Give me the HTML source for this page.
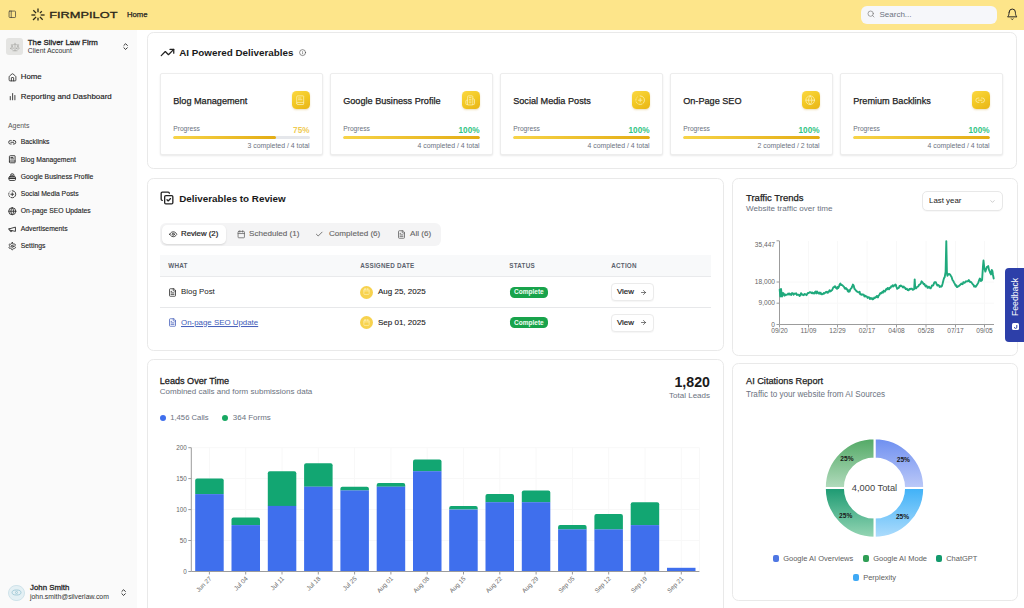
<!DOCTYPE html><html><head><meta charset="utf-8"><title>FirmPilot</title><style>
*{box-sizing:border-box;margin:0;padding:0}
html,body{width:1024px;height:608px;overflow:hidden;background:#fff}
body{font-family:"Liberation Sans",sans-serif;position:relative;color:#222}
.abs,.t,.ic,.card,.sub{position:absolute}
.t{white-space:nowrap;line-height:1}
.ic{display:block;overflow:visible}
.card{background:#fff;border:1px solid #e9e9e9;border-radius:6.5px}
.sub{background:#fff;border:1px solid #ededed;border-radius:2px;box-shadow:0 1px 2px rgba(0,0,0,.09)}
.tile{position:absolute;width:17.6px;height:18px;border-radius:4.5px;background:linear-gradient(150deg,#fbd842 0%,#f2c824 50%,#e8b416 100%);box-shadow:0 1px 2px rgba(190,140,0,.28)}
.pbar{position:absolute;height:3px;border-radius:2px;background:#e5e7eb;overflow:hidden}
.pbar i{display:block;height:100%;border-radius:2px;background:linear-gradient(90deg,#f7d448 0%,#e3ac14 100%)}
</style></head><body>
<div class="abs" style="left:0;top:0;width:1024px;height:30px;background:#fde58a"></div>
<svg class="ic" style="left:7.6px;top:10px;width:8.6px;height:8.6px" viewBox="0 0 24 24" fill="none" stroke="#333" stroke-width="1.9" stroke-linecap="round" stroke-linejoin="round" ><rect width="18" height="18" x="3" y="3" rx="2"/><path d="M9 3v18"/></svg>
<svg class="ic" style="left:28.3px;top:4.5px;width:20px;height:20px" viewBox="0 0 20 20" stroke="#2a2618" stroke-width="1.3" stroke-linecap="butt"><line x1="10.00" y1="7.30" x2="10.00" y2="3.40"/><line x1="11.91" y1="8.09" x2="13.82" y2="6.18"/><line x1="12.70" y1="10.00" x2="16.60" y2="10.00"/><line x1="11.91" y1="11.91" x2="14.67" y2="14.67"/><line x1="10.00" y1="12.70" x2="10.00" y2="15.40"/><line x1="8.09" y1="11.91" x2="5.05" y2="14.95"/><line x1="7.30" y1="10.00" x2="3.40" y2="10.00"/><line x1="8.09" y1="8.09" x2="5.33" y2="5.33"/></svg>
<svg class="ic" style="left:49px;top:6px;width:72px;height:16px" viewBox="0 0 72 16"><text x="0.2" y="12.1" font-family="Liberation Sans, sans-serif" font-size="9.9" font-weight="400" fill="#2a2618" stroke="#2a2618" stroke-width=".32" textLength="68.3" lengthAdjust="spacingAndGlyphs">FIRMPILOT</text></svg>
<div class="t" style="top:14.7px;font-size:7.7px;color:#222;font-weight:400;left:127px;transform:translateY(-50%);-webkit-text-stroke:.25px #222;">Home</div>
<div class="abs" style="left:860.5px;top:5.5px;width:136px;height:18px;border-radius:6px;background:#f6f7fa"></div>
<svg class="ic" style="left:866.5px;top:10.2px;width:8px;height:8px" viewBox="0 0 24 24" fill="none" stroke="#777" stroke-width="2" stroke-linecap="round" stroke-linejoin="round" ><circle cx="11" cy="11" r="8"/><path d="m21 21-4.3-4.3"/></svg>
<div class="t" style="top:14.5px;font-size:8px;color:#6b7280;font-weight:400;left:879.5px;transform:translateY(-50%);">Search...</div>
<svg class="ic" style="left:1005.5px;top:7.8px;width:12.5px;height:12.5px" viewBox="0 0 24 24" fill="none" stroke="#222" stroke-width="1.9" stroke-linecap="round" stroke-linejoin="round" ><path d="M6 8a6 6 0 0 1 12 0c0 7 3 9 3 9H3s3-2 3-9"/><path d="M10.3 21a1.94 1.94 0 0 0 3.4 0"/></svg>
<div class="abs" style="left:0;top:30px;width:137px;height:578px;background:#fafafa"></div>
<div class="abs" style="left:6.3px;top:38.3px;width:16.4px;height:16.7px;border-radius:3px;background:#e4e4e2"></div>
<svg class="ic" style="left:9.5px;top:41.5px;width:10px;height:10px" viewBox="0 0 24 24" fill="none" stroke="#a3a3a0" stroke-width="1.6" stroke-linecap="round" stroke-linejoin="round" ><path d="m16 16 3-8 3 8c-.87.65-1.92 1-3 1s-2.13-.35-3-1Z"/><path d="m2 16 3-8 3 8c-.87.65-1.92 1-3 1s-2.13-.35-3-1Z"/><path d="M7 21h10"/><path d="M12 3v18"/><path d="M3 7h2c2 0 5-1 7-2 2 1 5 2 7 2h2"/></svg>
<div class="t" style="top:42.5px;font-size:7.88px;color:#222;font-weight:400;left:27.8px;transform:translateY(-50%);-webkit-text-stroke:.28px #222;">The Silver Law Firm</div>
<div class="t" style="top:50.8px;font-size:6.9px;color:#333;font-weight:400;left:27.8px;transform:translateY(-50%);">Client Account</div>
<svg class="ic" style="left:121.2px;top:42.3px;width:9.2px;height:9.2px" viewBox="0 0 24 24" fill="none" stroke="#2a2a2a" stroke-width="2.5" stroke-linecap="round" stroke-linejoin="round" ><path d="M7.5 15 12 19.5 16.5 15"/><path d="M7.5 9 12 4.5 16.5 9"/></svg>
<svg class="ic" style="left:7.5px;top:72.8px;width:9px;height:9px" viewBox="0 0 24 24" fill="none" stroke="#333" stroke-width="2.3" stroke-linecap="round" stroke-linejoin="round" ><path d="M15 21v-8a1 1 0 0 0-1-1h-4a1 1 0 0 0-1 1v8"/><path d="M3 10a2 2 0 0 1 .709-1.528l7-5.999a2 2 0 0 1 2.582 0l7 5.999A2 2 0 0 1 21 10v9a2 2 0 0 1-2 2H5a2 2 0 0 1-2-2z"/></svg>
<div class="t" style="top:77.1px;font-size:7.85px;color:#222;font-weight:400;left:20.8px;transform:translateY(-50%);-webkit-text-stroke:.15px #222;">Home</div>
<svg class="ic" style="left:7.6px;top:91.6px;width:9.2px;height:9.2px" viewBox="0 0 24 24" fill="none" stroke="#4a4a4a" stroke-width="2.7" stroke-linecap="round" stroke-linejoin="round" ><path d="M18 20V9"/><path d="M12 20V4"/><path d="M6 20v-8"/></svg>
<div class="t" style="top:96.5px;font-size:7.95px;color:#222;font-weight:400;left:20.8px;transform:translateY(-50%);-webkit-text-stroke:.15px #222;">Reporting and Dashboard</div>
<div class="t" style="top:126.4px;font-size:6.9px;color:#555;font-weight:400;left:8px;transform:translateY(-50%);">Agents</div>
<svg class="ic" style="left:7.8px;top:137.8px;width:8.5px;height:8.5px" viewBox="0 0 24 24" fill="none" stroke="#333" stroke-width="2.6" stroke-linecap="round" stroke-linejoin="round" ><path d="M9 17H7A5 5 0 0 1 7 7h2"/><path d="M15 7h2a5 5 0 1 1 0 10h-2"/><line x1="8" x2="16" y1="12" y2="12"/></svg>
<div class="t" style="top:142.0px;font-size:6.8px;color:#222;font-weight:400;left:20.8px;transform:translateY(-50%);-webkit-text-stroke:.12px #222;">Backlinks</div>
<svg class="ic" style="left:7.8px;top:155.4px;width:8.5px;height:8.5px" viewBox="0 0 24 24" fill="none" stroke="#333" stroke-width="2.6" stroke-linecap="round" stroke-linejoin="round" ><path d="M4 19.5v-15A2.5 2.5 0 0 1 6.5 2H19a1 1 0 0 1 1 1v18a1 1 0 0 1-1 1H6.5a1 1 0 0 1 0-5H20"/><path d="M8 11h8"/><path d="M8 7h6"/></svg>
<div class="t" style="top:159.6px;font-size:6.8px;color:#222;font-weight:400;left:20.8px;transform:translateY(-50%);-webkit-text-stroke:.12px #222;">Blog Management</div>
<svg class="ic" style="left:7.8px;top:173.20000000000002px;width:8.5px;height:8.5px" viewBox="0 0 24 24" fill="none" stroke="#333" stroke-width="2.6" stroke-linecap="round" stroke-linejoin="round" ><path d="M7 10V7a5 5 0 0 1 10 0v3"/><rect x="3" y="10" width="18" height="11" rx="2.5"/><path d="M3 15h18" stroke-width="4"/><path d="M10 6.5h4"/></svg>
<div class="t" style="top:177.4px;font-size:6.8px;color:#222;font-weight:400;left:20.8px;transform:translateY(-50%);-webkit-text-stroke:.12px #222;">Google Business Profile</div>
<svg class="ic" style="left:7.8px;top:189.8px;width:8.5px;height:8.5px" viewBox="0 0 24 24" fill="none" stroke="#333" stroke-width="2.6" stroke-linecap="round" stroke-linejoin="round" ><path d="M12 2a10 10 0 0 1 7.38 16.75"/><path d="M12 8v8"/><path d="M16 12H8"/><path d="M2.5 8.875a10 10 0 0 0-.5 3"/><path d="M2.83 16a10 10 0 0 0 2.43 3.4"/><path d="M4.636 5.235a10 10 0 0 1 .891-.857"/><path d="M8.644 21.42a10 10 0 0 0 7.631-.38"/></svg>
<div class="t" style="top:194.0px;font-size:6.8px;color:#222;font-weight:400;left:20.8px;transform:translateY(-50%);-webkit-text-stroke:.12px #222;">Social Media Posts</div>
<svg class="ic" style="left:7.8px;top:207.10000000000002px;width:8.5px;height:8.5px" viewBox="0 0 24 24" fill="none" stroke="#333" stroke-width="2.6" stroke-linecap="round" stroke-linejoin="round" ><circle cx="12" cy="12" r="10"/><path d="M12 2a14.5 14.5 0 0 0 0 20 14.5 14.5 0 0 0 0-20"/><path d="M2 12h20"/></svg>
<div class="t" style="top:211.3px;font-size:6.8px;color:#222;font-weight:400;left:20.8px;transform:translateY(-50%);-webkit-text-stroke:.12px #222;">On-page SEO Updates</div>
<svg class="ic" style="left:7.8px;top:224.5px;width:8.5px;height:8.5px" viewBox="0 0 24 24" fill="none" stroke="#333" stroke-width="2.6" stroke-linecap="round" stroke-linejoin="round" ><path d="m3 11 18-5v12L3 14v-3z"/><path d="M11.6 16.8a3 3 0 1 1-5.8-1.6"/></svg>
<div class="t" style="top:228.7px;font-size:6.8px;color:#222;font-weight:400;left:20.8px;transform:translateY(-50%);-webkit-text-stroke:.12px #222;">Advertisements</div>
<svg class="ic" style="left:7.8px;top:241.60000000000002px;width:8.5px;height:8.5px" viewBox="0 0 24 24" fill="none" stroke="#333" stroke-width="2.6" stroke-linecap="round" stroke-linejoin="round" ><path d="M12.22 2h-.44a2 2 0 0 0-2 2v.18a2 2 0 0 1-1 1.73l-.43.25a2 2 0 0 1-2 0l-.15-.08a2 2 0 0 0-2.73.73l-.22.38a2 2 0 0 0 .73 2.73l.15.1a2 2 0 0 1 1 1.72v.51a2 2 0 0 1-1 1.74l-.15.09a2 2 0 0 0-.73 2.73l.22.38a2 2 0 0 0 2.73.73l.15-.08a2 2 0 0 1 2 0l.43.25a2 2 0 0 1 1 1.73V20a2 2 0 0 0 2 2h.44a2 2 0 0 0 2-2v-.18a2 2 0 0 1 1-1.73l.43-.25a2 2 0 0 1 2 0l.15.08a2 2 0 0 0 2.73-.73l.22-.39a2 2 0 0 0-.73-2.73l-.15-.08a2 2 0 0 1-1-1.74v-.5a2 2 0 0 1 1-1.74l.15-.09a2 2 0 0 0 .73-2.73l-.22-.38a2 2 0 0 0-2.73-.73l-.15.08a2 2 0 0 1-2 0l-.43-.25a2 2 0 0 1-1-1.73V4a2 2 0 0 0-2-2z"/><circle cx="12" cy="12" r="3"/></svg>
<div class="t" style="top:245.8px;font-size:6.8px;color:#222;font-weight:400;left:20.8px;transform:translateY(-50%);-webkit-text-stroke:.12px #222;">Settings</div>
<div class="abs" style="left:8.2px;top:584.5px;width:16.6px;height:16.6px;border-radius:50%;background:#e4f0f4;border:1px solid #cfe3ea"></div>
<svg class="ic" style="left:11px;top:589.3px;width:11px;height:7px" viewBox="0 0 22 14" fill="none" stroke="#a3cbd8" stroke-width="2"><ellipse cx="11" cy="7" rx="9" ry="5"/><circle cx="11" cy="7" r="2"/></svg>
<div class="t" style="top:588.4px;font-size:7.85px;color:#222;font-weight:400;left:30px;transform:translateY(-50%);-webkit-text-stroke:.28px #222;">John Smith</div>
<div class="t" style="top:597.4px;font-size:6.85px;color:#333;font-weight:400;left:30px;transform:translateY(-50%);">john.smith@silverlaw.com</div>
<svg class="ic" style="left:119.2px;top:588.3px;width:9.2px;height:9.2px" viewBox="0 0 24 24" fill="none" stroke="#2a2a2a" stroke-width="2.5" stroke-linecap="round" stroke-linejoin="round" ><path d="M7.5 15 12 19.5 16.5 15"/><path d="M7.5 9 12 4.5 16.5 9"/></svg>
<div class="card" style="left:147px;top:32px;width:870px;height:137px"></div>
<svg class="ic" style="left:159.6px;top:45.4px;width:15px;height:15px" viewBox="0 0 24 24" fill="none" stroke="#222" stroke-width="2" stroke-linecap="round" stroke-linejoin="round" ><path d="M16 7h6v6"/><path d="m22 7-8.5 8.5-5-5L2 17"/></svg>
<div class="t" style="top:53.2px;font-size:9.84px;color:#1a1a1a;font-weight:700;left:179.2px;transform:translateY(-50%);">AI Powered Deliverables</div>
<svg class="ic" style="left:298.6px;top:49.1px;width:7.2px;height:7.2px" viewBox="0 0 24 24" fill="none" stroke="#444" stroke-width="2" stroke-linecap="round" stroke-linejoin="round" ><circle cx="12" cy="12" r="10"/><path d="M12 16v-4"/><path d="M12 8h.01"/></svg>
<div class="sub" style="left:160px;top:73px;width:163px;height:82px"></div>
<div class="t" style="top:102.0px;font-size:9.15px;color:#222;font-weight:400;left:173.2px;transform:translateY(-50%);-webkit-text-stroke:.25px #222;">Blog Management</div>
<div class="tile" style="left:292.2px;top:90.8px"></div>
<svg class="ic" style="left:295.4px;top:94.6px;width:10.4px;height:10.4px" viewBox="0 0 24 24" fill="none" stroke="#fdf0b0" stroke-width="1.8" stroke-linecap="round" stroke-linejoin="round" ><path d="M4 19.5v-15A2.5 2.5 0 0 1 6.5 2H19a1 1 0 0 1 1 1v18a1 1 0 0 1-1 1H6.5a1 1 0 0 1 0-5H20"/><path d="M8 11h8"/><path d="M8 7h6"/></svg>
<div class="t" style="top:128.9px;font-size:6.7px;color:#6b7280;font-weight:400;left:173.2px;transform:translateY(-50%);">Progress</div>
<div class="t" style="top:130.8px;font-size:8.2px;color:#efcb55;font-weight:700;right:714.5px;transform:translateY(-50%);">75%</div>
<div class="pbar" style="left:173px;top:136.3px;width:137px"><i style="width:75%"></i></div>
<div class="t" style="top:146px;font-size:6.9px;color:#6b7280;font-weight:400;right:714.5px;transform:translateY(-50%);">3 completed / 4 total</div>
<div class="sub" style="left:330px;top:73px;width:163px;height:82px"></div>
<div class="t" style="top:102.0px;font-size:9.15px;color:#222;font-weight:400;left:343.2px;transform:translateY(-50%);-webkit-text-stroke:.25px #222;">Google Business Profile</div>
<div class="tile" style="left:462.2px;top:90.8px"></div>
<svg class="ic" style="left:465.4px;top:94.6px;width:10.4px;height:10.4px" viewBox="0 0 24 24" fill="none" stroke="#fdf0b0" stroke-width="1.8" stroke-linecap="round" stroke-linejoin="round" ><path d="M6 22V4a2 2 0 0 1 2-2h8a2 2 0 0 1 2 2v18Z"/><path d="M6 12H4a2 2 0 0 0-2 2v6a2 2 0 0 0 2 2h2"/><path d="M18 9h2a2 2 0 0 1 2 2v9a2 2 0 0 1-2 2h-2"/><path d="M10 6h4"/><path d="M10 10h4"/><path d="M10 14h4"/><path d="M10 18h4"/></svg>
<div class="t" style="top:128.9px;font-size:6.7px;color:#6b7280;font-weight:400;left:343.2px;transform:translateY(-50%);">Progress</div>
<div class="t" style="top:130.8px;font-size:8.2px;color:#33c485;font-weight:700;right:544.5px;transform:translateY(-50%);">100%</div>
<div class="pbar" style="left:343px;top:136.3px;width:137px"><i style="width:100%"></i></div>
<div class="t" style="top:146px;font-size:6.9px;color:#6b7280;font-weight:400;right:544.5px;transform:translateY(-50%);">4 completed / 4 total</div>
<div class="sub" style="left:500px;top:73px;width:163px;height:82px"></div>
<div class="t" style="top:102.0px;font-size:9.15px;color:#222;font-weight:400;left:513.2px;transform:translateY(-50%);-webkit-text-stroke:.25px #222;">Social Media Posts</div>
<div class="tile" style="left:632.2px;top:90.8px"></div>
<svg class="ic" style="left:635.4px;top:94.6px;width:10.4px;height:10.4px" viewBox="0 0 24 24" fill="none" stroke="#fdf0b0" stroke-width="1.8" stroke-linecap="round" stroke-linejoin="round" ><path d="M12 2a10 10 0 0 1 7.38 16.75"/><path d="M12 8v8"/><path d="M16 12H8"/><path d="M2.5 8.875a10 10 0 0 0-.5 3"/><path d="M2.83 16a10 10 0 0 0 2.43 3.4"/><path d="M4.636 5.235a10 10 0 0 1 .891-.857"/><path d="M8.644 21.42a10 10 0 0 0 7.631-.38"/></svg>
<div class="t" style="top:128.9px;font-size:6.7px;color:#6b7280;font-weight:400;left:513.2px;transform:translateY(-50%);">Progress</div>
<div class="t" style="top:130.8px;font-size:8.2px;color:#33c485;font-weight:700;right:374.5px;transform:translateY(-50%);">100%</div>
<div class="pbar" style="left:513px;top:136.3px;width:137px"><i style="width:100%"></i></div>
<div class="t" style="top:146px;font-size:6.9px;color:#6b7280;font-weight:400;right:374.5px;transform:translateY(-50%);">4 completed / 4 total</div>
<div class="sub" style="left:670px;top:73px;width:163px;height:82px"></div>
<div class="t" style="top:102.0px;font-size:9.15px;color:#222;font-weight:400;left:683.2px;transform:translateY(-50%);-webkit-text-stroke:.25px #222;">On-Page SEO</div>
<div class="tile" style="left:802.2px;top:90.8px"></div>
<svg class="ic" style="left:805.4px;top:94.6px;width:10.4px;height:10.4px" viewBox="0 0 24 24" fill="none" stroke="#fdf0b0" stroke-width="1.8" stroke-linecap="round" stroke-linejoin="round" ><circle cx="12" cy="12" r="10"/><path d="M12 2a14.5 14.5 0 0 0 0 20 14.5 14.5 0 0 0 0-20"/><path d="M2 12h20"/></svg>
<div class="t" style="top:128.9px;font-size:6.7px;color:#6b7280;font-weight:400;left:683.2px;transform:translateY(-50%);">Progress</div>
<div class="t" style="top:130.8px;font-size:8.2px;color:#33c485;font-weight:700;right:204.5px;transform:translateY(-50%);">100%</div>
<div class="pbar" style="left:683px;top:136.3px;width:137px"><i style="width:100%"></i></div>
<div class="t" style="top:146px;font-size:6.9px;color:#6b7280;font-weight:400;right:204.5px;transform:translateY(-50%);">2 completed / 2 total</div>
<div class="sub" style="left:840px;top:73px;width:163px;height:82px"></div>
<div class="t" style="top:102.0px;font-size:9.15px;color:#222;font-weight:400;left:853.2px;transform:translateY(-50%);-webkit-text-stroke:.25px #222;">Premium Backlinks</div>
<div class="tile" style="left:972.2px;top:90.8px"></div>
<svg class="ic" style="left:975.4px;top:94.6px;width:10.4px;height:10.4px" viewBox="0 0 24 24" fill="none" stroke="#fdf0b0" stroke-width="1.8" stroke-linecap="round" stroke-linejoin="round" ><path d="M9 17H7A5 5 0 0 1 7 7h2"/><path d="M15 7h2a5 5 0 1 1 0 10h-2"/><line x1="8" x2="16" y1="12" y2="12"/></svg>
<div class="t" style="top:128.9px;font-size:6.7px;color:#6b7280;font-weight:400;left:853.2px;transform:translateY(-50%);">Progress</div>
<div class="t" style="top:130.8px;font-size:8.2px;color:#33c485;font-weight:700;right:34.5px;transform:translateY(-50%);">100%</div>
<div class="pbar" style="left:853px;top:136.3px;width:137px"><i style="width:100%"></i></div>
<div class="t" style="top:146px;font-size:6.9px;color:#6b7280;font-weight:400;right:34.5px;transform:translateY(-50%);">4 completed / 4 total</div>
<div class="card" style="left:147px;top:178px;width:577px;height:173px"></div>
<svg class="ic" style="left:160px;top:191.3px;width:14px;height:14px" viewBox="0 0 24 24" fill="none" stroke="#222" stroke-width="2.25" stroke-linecap="round" stroke-linejoin="round" ><path d="m12 15 2 2 4-4"/><rect width="14" height="14" x="8" y="8" rx="2"/><path d="M4 16c-1.1 0-2-.9-2-2V4c0-1.1.9-2 2-2h10c1.1 0 2 .9 2 2"/></svg>
<div class="t" style="top:198.8px;font-size:9.84px;color:#1a1a1a;font-weight:700;left:179.2px;transform:translateY(-50%);">Deliverables to Review</div>
<div class="abs" style="left:160px;top:223px;width:281px;height:23px;border-radius:6px;background:#f4f4f5"></div>
<div class="abs" style="left:161.5px;top:225px;width:64.3px;height:18.5px;border-radius:5px;background:#fff;box-shadow:0 1px 2px rgba(0,0,0,.12)"></div>
<svg class="ic" style="left:168.5px;top:230.2px;width:8.5px;height:8.5px" viewBox="0 0 24 24" fill="none" stroke="#2a2a2a" stroke-width="2.3" stroke-linecap="round" stroke-linejoin="round" ><path d="M2 12s3-7 10-7 10 7 10 7-3 7-10 7-10-7-10-7Z"/><circle cx="12" cy="12" r="3"/></svg>
<div class="t" style="top:234px;font-size:7.8px;color:#222;font-weight:400;left:181px;transform:translateY(-50%);-webkit-text-stroke:.2px #222;">Review (2)</div>
<svg class="ic" style="left:237px;top:230px;width:8.5px;height:8.5px" viewBox="0 0 24 24" fill="none" stroke="#666" stroke-width="2.2" stroke-linecap="round" stroke-linejoin="round" ><rect width="18" height="18" x="3" y="4" rx="2"/><path d="M16 2v4"/><path d="M8 2v4"/><path d="M3 10h18"/></svg>
<div class="t" style="top:234px;font-size:8.1px;color:#666;font-weight:400;left:249px;transform:translateY(-50%);-webkit-text-stroke:.12px #666;">Scheduled (1)</div>
<svg class="ic" style="left:315.3px;top:230px;width:8.5px;height:8.5px" viewBox="0 0 24 24" fill="none" stroke="#5c5c5c" stroke-width="2.3" stroke-linecap="round" stroke-linejoin="round" ><path d="M20 6 9 17l-5-5"/></svg>
<div class="t" style="top:234px;font-size:8.1px;color:#666;font-weight:400;left:329px;transform:translateY(-50%);-webkit-text-stroke:.12px #666;">Completed (6)</div>
<svg class="ic" style="left:397.3px;top:229.8px;width:9px;height:9px" viewBox="0 0 24 24" fill="none" stroke="#666" stroke-width="2.2" stroke-linecap="round" stroke-linejoin="round" ><path d="M15 2H6a2 2 0 0 0-2 2v16a2 2 0 0 0 2 2h12a2 2 0 0 0 2-2V7Z"/><path d="M14 2v4a2 2 0 0 0 2 2h4"/><path d="M10 9H8"/><path d="M16 13H8"/><path d="M16 17H8"/></svg>
<div class="t" style="top:234px;font-size:8.1px;color:#666;font-weight:400;left:410px;transform:translateY(-50%);-webkit-text-stroke:.12px #666;">All (6)</div>
<div class="abs" style="left:160px;top:255px;width:551px;height:22px;background:#f8f9fa;border-bottom:1px solid #e9eaec"></div>
<div class="t" style="top:266px;font-size:6.3px;color:#5b626d;font-weight:700;letter-spacing:0.22px;left:168.3px;transform:translateY(-50%);">WHAT</div>
<div class="t" style="top:266px;font-size:6.3px;color:#5b626d;font-weight:700;letter-spacing:0.22px;left:360.3px;transform:translateY(-50%);">ASSIGNED DATE</div>
<div class="t" style="top:266px;font-size:6.3px;color:#5b626d;font-weight:700;letter-spacing:0.22px;left:509.3px;transform:translateY(-50%);">STATUS</div>
<div class="t" style="top:266px;font-size:6.3px;color:#5b626d;font-weight:700;letter-spacing:0.22px;left:611.3px;transform:translateY(-50%);">ACTION</div>
<div class="abs" style="left:160px;top:307px;width:551px;height:1px;background:#e7e8ea"></div>
<svg class="ic" style="left:167.5px;top:287.5px;width:9px;height:9px" viewBox="0 0 24 24" fill="none" stroke="#222" stroke-width="2" stroke-linecap="round" stroke-linejoin="round" ><path d="M15 2H6a2 2 0 0 0-2 2v16a2 2 0 0 0 2 2h12a2 2 0 0 0 2-2V7Z"/><path d="M14 2v4a2 2 0 0 0 2 2h4"/><path d="M10 9H8"/><path d="M16 13H8"/><path d="M16 17H8"/></svg>
<div class="t" style="top:292px;font-size:7.9px;color:#222;font-weight:400;left:181px;transform:translateY(-50%);">Blog Post</div>
<div class="abs" style="left:360px;top:285.5px;width:13px;height:13px;border-radius:50%;background:#f7d24e"></div>
<svg class="ic" style="left:363px;top:288.2px;width:7px;height:7px" viewBox="0 0 24 24" fill="none" stroke="#fff2b8" stroke-width="2.3" stroke-linecap="round" stroke-linejoin="round" ><rect width="18" height="18" x="3" y="4" rx="2"/><path d="M16 2v4"/><path d="M8 2v4"/><path d="M3 10h18"/></svg>
<div class="t" style="top:292.2px;font-size:8.0px;color:#222;font-weight:400;left:378px;transform:translateY(-50%);-webkit-text-stroke:.12px #222;">Aug 25, 2025</div>
<div class="abs" style="left:509.6px;top:286.5px;width:38.6px;height:11.2px;border-radius:4.5px;background:#18a34b"></div>
<div class="t" style="top:292.1px;font-size:6.5px;color:#f3fff6;font-weight:700;left:528.9px;transform:translate(-50%,-50%);">Complete</div>
<div class="abs" style="left:611px;top:283px;width:43px;height:18px;border-radius:4px;background:#fff;border:1px solid #ebebeb;box-shadow:0 1px 1px rgba(0,0,0,.04)"></div>
<div class="t" style="top:292px;font-size:7.9px;color:#222;font-weight:400;left:617px;transform:translateY(-50%);-webkit-text-stroke:.2px #222;">View</div>
<svg class="ic" style="left:640px;top:288.5px;width:7px;height:7px" viewBox="0 0 24 24" fill="none" stroke="#333" stroke-width="2.2" stroke-linecap="round" stroke-linejoin="round" ><path d="M5 12h14"/><path d="m12 5 7 7-7 7"/></svg>
<svg class="ic" style="left:167.5px;top:318.0px;width:9px;height:9px" viewBox="0 0 24 24" fill="none" stroke="#405bb8" stroke-width="2" stroke-linecap="round" stroke-linejoin="round" ><path d="M15 2H6a2 2 0 0 0-2 2v16a2 2 0 0 0 2 2h12a2 2 0 0 0 2-2V7Z"/><path d="M14 2v4a2 2 0 0 0 2 2h4"/><path d="M10 9H8"/><path d="M16 13H8"/><path d="M16 17H8"/></svg>
<div class="t" style="top:322.5px;font-size:7.9px;color:#405bb8;font-weight:400;left:181px;transform:translateY(-50%);text-decoration:underline;">On-page SEO Update</div>
<div class="abs" style="left:360px;top:316.0px;width:13px;height:13px;border-radius:50%;background:#f7d24e"></div>
<svg class="ic" style="left:363px;top:318.7px;width:7px;height:7px" viewBox="0 0 24 24" fill="none" stroke="#fff2b8" stroke-width="2.3" stroke-linecap="round" stroke-linejoin="round" ><rect width="18" height="18" x="3" y="4" rx="2"/><path d="M16 2v4"/><path d="M8 2v4"/><path d="M3 10h18"/></svg>
<div class="t" style="top:322.7px;font-size:8.0px;color:#222;font-weight:400;left:378px;transform:translateY(-50%);-webkit-text-stroke:.12px #222;">Sep 01, 2025</div>
<div class="abs" style="left:509.6px;top:317.0px;width:38.6px;height:11.2px;border-radius:4.5px;background:#18a34b"></div>
<div class="t" style="top:322.6px;font-size:6.5px;color:#f3fff6;font-weight:700;left:528.9px;transform:translate(-50%,-50%);">Complete</div>
<div class="abs" style="left:611px;top:313.5px;width:43px;height:18px;border-radius:4px;background:#fff;border:1px solid #ebebeb;box-shadow:0 1px 1px rgba(0,0,0,.04)"></div>
<div class="t" style="top:322.5px;font-size:7.9px;color:#222;font-weight:400;left:617px;transform:translateY(-50%);-webkit-text-stroke:.2px #222;">View</div>
<svg class="ic" style="left:640px;top:319.0px;width:7px;height:7px" viewBox="0 0 24 24" fill="none" stroke="#333" stroke-width="2.2" stroke-linecap="round" stroke-linejoin="round" ><path d="M5 12h14"/><path d="m12 5 7 7-7 7"/></svg>
<div class="card" style="left:732px;top:178px;width:286px;height:178px"></div>
<div class="t" style="top:197.6px;font-size:9.5px;color:#222;font-weight:400;left:746px;transform:translateY(-50%);-webkit-text-stroke:.25px #222;">Traffic Trends</div>
<div class="t" style="top:209.4px;font-size:8.1px;color:#6b7280;font-weight:400;left:746px;transform:translateY(-50%);">Website traffic over time</div>
<div class="abs" style="left:922px;top:191px;width:81px;height:20px;border-radius:5px;background:#fff;border:1px solid #e8e8e8;box-shadow:0 1px 1px rgba(0,0,0,.03)"></div>
<div class="t" style="top:201px;font-size:7.9px;color:#222;font-weight:400;left:929px;transform:translateY(-50%);">Last year</div>
<svg class="ic" style="left:989px;top:197.5px;width:7px;height:7px" viewBox="0 0 24 24" fill="none" stroke="#aaa" stroke-width="2" stroke-linecap="round" stroke-linejoin="round" ><path d="m6 9 6 6 6-6"/></svg>
<svg class="ic" style="left:733px;top:178px;width:285px;height:178px" viewBox="733 178 285 178"><line x1="808.5" y1="241" x2="808.5" y2="324.5" stroke="#f8f8f8" stroke-width="1"/><line x1="837.5" y1="241" x2="837.5" y2="324.5" stroke="#f8f8f8" stroke-width="1"/><line x1="867" y1="241" x2="867" y2="324.5" stroke="#f8f8f8" stroke-width="1"/><line x1="896.5" y1="241" x2="896.5" y2="324.5" stroke="#f8f8f8" stroke-width="1"/><line x1="926" y1="241" x2="926" y2="324.5" stroke="#f8f8f8" stroke-width="1"/><line x1="955.5" y1="241" x2="955.5" y2="324.5" stroke="#f8f8f8" stroke-width="1"/><line x1="984.5" y1="241" x2="984.5" y2="324.5" stroke="#f8f8f8" stroke-width="1"/><line x1="779.5" y1="303.2" x2="994" y2="303.2" stroke="#f8f8f8" stroke-width="1"/><line x1="779.5" y1="282.0" x2="994" y2="282.0" stroke="#f8f8f8" stroke-width="1"/><line x1="779.5" y1="241" x2="779.5" y2="324.5" stroke="#9c9c9c" stroke-width="1"/><line x1="779.5" y1="324.5" x2="994" y2="324.5" stroke="#9c9c9c" stroke-width="1"/><line x1="776.5" y1="324.5" x2="779.5" y2="324.5" stroke="#9c9c9c" stroke-width="1"/><line x1="776.5" y1="303.2" x2="779.5" y2="303.2" stroke="#9c9c9c" stroke-width="1"/><line x1="776.5" y1="282.0" x2="779.5" y2="282.0" stroke="#9c9c9c" stroke-width="1"/><line x1="776.5" y1="240.8" x2="779.5" y2="240.8" stroke="#9c9c9c" stroke-width="1"/><line x1="779.5" y1="324.5" x2="779.5" y2="327.5" stroke="#9c9c9c" stroke-width="1"/><line x1="808.5" y1="324.5" x2="808.5" y2="327.5" stroke="#9c9c9c" stroke-width="1"/><line x1="837.5" y1="324.5" x2="837.5" y2="327.5" stroke="#9c9c9c" stroke-width="1"/><line x1="867" y1="324.5" x2="867" y2="327.5" stroke="#9c9c9c" stroke-width="1"/><line x1="896.5" y1="324.5" x2="896.5" y2="327.5" stroke="#9c9c9c" stroke-width="1"/><line x1="926" y1="324.5" x2="926" y2="327.5" stroke="#9c9c9c" stroke-width="1"/><line x1="955.5" y1="324.5" x2="955.5" y2="327.5" stroke="#9c9c9c" stroke-width="1"/><line x1="984.5" y1="324.5" x2="984.5" y2="327.5" stroke="#9c9c9c" stroke-width="1"/><path d="M779.7 289.6 L780.3 296.5 L781.0 289.0 L782.0 296.5 L783.0 293.0 L783.7 293.5 L784.4 295.7 L785.0 294.4 L785.7 295.2 L786.4 294.6 L787.0 294.6 L787.6 294.6 L788.2 293.5 L788.8 294.4 L789.4 293.6 L790.0 294.6 L790.6 294.2 L791.2 295.0 L791.8 293.1 L792.4 293.1 L793.0 293.6 L793.6 294.7 L794.2 293.9 L794.9 293.5 L795.5 293.8 L796.2 293.3 L797.0 295.0 L797.6 294.7 L798.3 294.6 L799.0 294.8 L799.6 296.0 L800.3 295.4 L801.0 293.2 L801.7 294.0 L802.3 294.7 L803.0 295.0 L803.7 295.2 L804.4 294.0 L805.1 294.1 L805.8 294.5 L806.5 295.2 L807.2 293.9 L808.0 293.0 L808.7 293.1 L809.4 292.6 L810.0 292.1 L810.7 292.4 L811.5 293.2 L812.2 292.5 L813.0 293.4 L813.7 293.0 L814.3 293.4 L815.0 292.0 L815.6 291.6 L816.3 293.4 L817.0 291.4 L817.6 292.4 L818.4 293.5 L819.2 292.5 L820.0 293.8 L820.6 292.7 L821.3 294.2 L821.9 294.4 L822.6 294.0 L823.2 293.8 L823.9 292.9 L824.6 293.4 L825.3 292.7 L826.0 292.0 L826.6 291.8 L827.2 292.6 L827.8 292.8 L828.4 291.5 L829.0 291.5 L829.6 290.2 L830.2 291.5 L830.9 291.1 L831.5 290.5 L832.2 290.0 L833.0 288.0 L833.6 287.1 L834.3 286.8 L835.0 286.2 L835.6 287.7 L836.3 287.5 L837.0 288.8 L837.7 287.0 L838.3 287.9 L839.0 286.5 L839.7 284.4 L840.4 283.5 L841.2 285.1 L842.0 285.0 L842.7 285.5 L843.3 286.3 L844.0 286.8 L844.6 288.1 L845.2 288.8 L845.9 287.9 L846.5 289.0 L847.1 289.2 L847.7 291.0 L848.3 291.7 L848.9 290.2 L849.5 291.6 L850.2 289.8 L850.8 288.6 L851.5 288.0 L852.2 286.5 L852.9 284.6 L853.7 285.6 L854.5 289.0 L855.2 289.4 L855.8 290.5 L856.5 291.0 L857.1 291.8 L857.8 291.8 L858.4 292.4 L859.0 292.5 L859.6 291.8 L860.2 294.2 L860.8 294.3 L861.4 294.8 L862.0 294.3 L862.6 294.5 L863.2 294.9 L863.8 294.7 L864.4 296.4 L865.0 296.5 L865.6 295.8 L866.3 296.5 L867.0 296.7 L867.6 297.9 L868.4 297.2 L869.2 297.4 L870.0 299.0 L870.6 298.1 L871.3 298.8 L872.0 298.1 L872.6 299.3 L873.4 299.1 L874.2 297.6 L875.0 298.0 L875.6 297.3 L876.2 296.9 L876.8 295.9 L877.4 297.3 L878.0 297.3 L878.6 295.7 L879.4 294.9 L880.2 293.2 L881.0 293.5 L881.6 292.6 L882.3 291.9 L882.9 292.8 L883.6 290.7 L884.2 291.0 L884.9 291.7 L885.6 290.3 L886.3 289.0 L887.0 289.5 L887.7 287.9 L888.4 288.7 L889.0 289.3 L889.7 287.7 L890.5 287.8 L891.2 286.3 L892.0 286.5 L892.7 285.3 L893.3 286.4 L894.0 285.4 L894.6 285.6 L895.3 284.6 L895.9 285.1 L896.5 287.0 L897.2 288.8 L898.0 288.2 L898.8 287.8 L899.5 286.0 L900.1 286.3 L900.8 285.5 L901.5 286.2 L902.3 286.5 L903.0 287.5 L903.7 286.6 L904.4 287.5 L905.0 287.7 L905.7 289.0 L906.4 288.8 L907.0 288.8 L907.6 290.0 L908.2 290.2 L908.8 290.2 L909.4 288.9 L910.0 289.3 L910.7 288.7 L911.3 288.7 L912.0 288.8 L912.6 289.8 L913.3 289.6 L914.2 289.0 L914.7 279.4 L915.2 288.2 L916.1 288.4 L917.0 287.0 L917.7 286.7 L918.3 286.4 L919.0 285.0 L919.6 284.5 L920.3 284.1 L921.0 282.9 L921.6 281.3 L922.3 282.1 L923.0 283.0 L923.7 284.2 L924.4 284.0 L925.0 285.3 L925.7 286.4 L926.4 285.6 L927.0 286.5 L927.6 287.9 L928.2 287.7 L928.8 286.7 L929.4 287.0 L930.0 288.2 L930.7 288.3 L931.3 287.1 L932.0 285.5 L932.6 285.6 L933.2 285.3 L933.8 283.8 L934.4 282.4 L935.0 282.1 L935.8 282.2 L936.5 284.0 L937.4 285.6 L938.3 284.9 L939.0 285.4 L939.6 286.9 L940.3 286.2 L941.0 286.8 L941.8 286.2 L942.5 284.0 L943.5 280.0 L944.1 278.0 L944.7 277.1 L945.6 272.0 L946.3 241.1 L946.9 272.0 L947.4 275.8 L948.2 274.3 L949.0 274.0 L949.9 274.3 L950.8 275.8 L951.6 277.0 L952.5 280.0 L953.3 281.0 L954.1 282.6 L954.9 284.0 L955.6 285.7 L956.3 285.2 L957.0 287.1 L957.7 286.8 L958.5 286.3 L959.2 285.7 L960.0 285.0 L960.6 284.5 L961.3 283.6 L961.9 284.0 L962.6 284.2 L963.3 282.2 L964.0 282.5 L964.6 282.8 L965.2 282.1 L965.9 281.3 L966.5 281.5 L967.3 281.1 L968.0 281.2 L968.8 280.0 L969.4 281.1 L970.0 282.0 L970.8 281.8 L971.6 282.7 L972.2 283.5 L972.9 284.4 L973.5 285.0 L974.2 286.6 L975.0 286.1 L975.7 286.8 L976.6 285.4 L977.5 284.0 L978.3 282.6 L979.1 280.2 L979.9 278.5 L981.0 281.0 L982.1 280.0 L983.0 266.0 L983.5 260.5 L984.3 268.0 L985.4 271.6 L986.1 269.2 L986.8 267.0 L987.5 267.0 L988.2 266.0 L988.9 269.6 L989.5 271.0 L990.2 272.8 L991.0 274.4 L991.8 270.0 L992.4 271.0 L993.0 275.0 L993.7 278.5" fill="none" stroke="#1fa97c" stroke-width="1.9" stroke-linejoin="round" stroke-linecap="round"/></svg>
<div class="t" style="top:324.5px;font-size:6.6px;color:#666;font-weight:400;right:249px;transform:translateY(-50%);">0</div>
<div class="t" style="top:303.25px;font-size:6.6px;color:#666;font-weight:400;right:249px;transform:translateY(-50%);">9,000</div>
<div class="t" style="top:282.0px;font-size:6.6px;color:#666;font-weight:400;right:249px;transform:translateY(-50%);">18,000</div>
<div class="t" style="top:244.60569444444445px;font-size:6.6px;color:#666;font-weight:400;right:249px;transform:translateY(-50%);">35,447</div>
<div class="t" style="top:331.3px;font-size:6.6px;color:#666;font-weight:400;left:779.5px;transform:translate(-50%,-50%);">09/20</div>
<div class="t" style="top:331.3px;font-size:6.6px;color:#666;font-weight:400;left:808.5px;transform:translate(-50%,-50%);">11/09</div>
<div class="t" style="top:331.3px;font-size:6.6px;color:#666;font-weight:400;left:837.5px;transform:translate(-50%,-50%);">12/29</div>
<div class="t" style="top:331.3px;font-size:6.6px;color:#666;font-weight:400;left:867px;transform:translate(-50%,-50%);">02/17</div>
<div class="t" style="top:331.3px;font-size:6.6px;color:#666;font-weight:400;left:896.5px;transform:translate(-50%,-50%);">04/08</div>
<div class="t" style="top:331.3px;font-size:6.6px;color:#666;font-weight:400;left:926px;transform:translate(-50%,-50%);">05/28</div>
<div class="t" style="top:331.3px;font-size:6.6px;color:#666;font-weight:400;left:955.5px;transform:translate(-50%,-50%);">07/17</div>
<div class="t" style="top:331.3px;font-size:6.6px;color:#666;font-weight:400;left:984.5px;transform:translate(-50%,-50%);">09/05</div>
<div class="abs" style="left:1005px;top:268px;width:22px;height:74px;border-radius:4px 0 0 4px;background:#2d3fa9"></div>
<div class="t" style="left:1015px;top:297px;font-size:8.7px;color:#fff;transform:translate(-50%,-50%) rotate(-90deg)">Feedback</div>
<div class="abs" style="left:1011.5px;top:323px;width:7px;height:7px;border-radius:1.5px;background:#fff"></div>
<svg class="ic" style="left:1011.5px;top:323px;width:7px;height:7px" viewBox="0 0 7 7" fill="none" stroke="#2d3fa9" stroke-width="1"><path d="M4.8 2 v2.2 a1.2 1.2 0 0 1 -2.4 0"/></svg>
<div class="card" style="left:147px;top:359px;width:577px;height:260px"></div>
<div class="t" style="top:382.2px;font-size:9.1px;color:#222;font-weight:400;left:159.8px;transform:translateY(-50%);-webkit-text-stroke:.3px #222;">Leads Over Time</div>
<div class="t" style="top:391.5px;font-size:8px;color:#6b7280;font-weight:400;left:159.8px;transform:translateY(-50%);">Combined calls and form submissions data</div>
<div class="t" style="top:382.2px;font-size:14.2px;color:#1a1a1a;font-weight:700;right:314px;transform:translateY(-50%);">1,820</div>
<div class="t" style="top:396.3px;font-size:8px;color:#6b7280;font-weight:400;right:314px;transform:translateY(-50%);">Total Leads</div>
<div class="abs" style="left:160px;top:415px;width:6px;height:6px;border-radius:50%;background:#3f6fed"></div>
<div class="t" style="top:418.3px;font-size:7.7px;color:#6b7280;font-weight:400;left:170.2px;transform:translateY(-50%);">1,456 Calls</div>
<div class="abs" style="left:222px;top:415px;width:6px;height:6px;border-radius:50%;background:#17a862"></div>
<div class="t" style="top:418.3px;font-size:7.95px;color:#6b7280;font-weight:400;left:232.8px;transform:translateY(-50%);">364 Forms</div>
<svg class="ic" style="left:147px;top:360px;width:577px;height:248px" viewBox="147 360 577 248"><line x1="191.3" y1="540.5" x2="699.4" y2="540.5" stroke="#f8f8f8" stroke-width="1"/><line x1="191.3" y1="509.6" x2="699.4" y2="509.6" stroke="#f8f8f8" stroke-width="1"/><line x1="191.3" y1="478.6" x2="699.4" y2="478.6" stroke="#f8f8f8" stroke-width="1"/><line x1="191.3" y1="447.7" x2="699.4" y2="447.7" stroke="#f8f8f8" stroke-width="1"/><line x1="209.4" y1="447.7" x2="209.4" y2="571.5" stroke="#f8f8f8" stroke-width="1"/><line x1="245.7" y1="447.7" x2="245.7" y2="571.5" stroke="#f8f8f8" stroke-width="1"/><line x1="282.0" y1="447.7" x2="282.0" y2="571.5" stroke="#f8f8f8" stroke-width="1"/><line x1="318.3" y1="447.7" x2="318.3" y2="571.5" stroke="#f8f8f8" stroke-width="1"/><line x1="354.6" y1="447.7" x2="354.6" y2="571.5" stroke="#f8f8f8" stroke-width="1"/><line x1="390.9" y1="447.7" x2="390.9" y2="571.5" stroke="#f8f8f8" stroke-width="1"/><line x1="427.2" y1="447.7" x2="427.2" y2="571.5" stroke="#f8f8f8" stroke-width="1"/><line x1="463.5" y1="447.7" x2="463.5" y2="571.5" stroke="#f8f8f8" stroke-width="1"/><line x1="499.8" y1="447.7" x2="499.8" y2="571.5" stroke="#f8f8f8" stroke-width="1"/><line x1="536.1" y1="447.7" x2="536.1" y2="571.5" stroke="#f8f8f8" stroke-width="1"/><line x1="572.4" y1="447.7" x2="572.4" y2="571.5" stroke="#f8f8f8" stroke-width="1"/><line x1="608.7" y1="447.7" x2="608.7" y2="571.5" stroke="#f8f8f8" stroke-width="1"/><line x1="645.0" y1="447.7" x2="645.0" y2="571.5" stroke="#f8f8f8" stroke-width="1"/><line x1="681.3" y1="447.7" x2="681.3" y2="571.5" stroke="#f8f8f8" stroke-width="1"/><line x1="699.4" y1="447.7" x2="699.4" y2="571.5" stroke="#f8f8f8" stroke-width="1"/><path d="M195.2 494.1 V480.6 Q195.2 478.6 197.2 478.6 H221.7 Q223.7 478.6 223.7 480.6 V494.1 Z" fill="#12a672"/><rect x="195.2" y="494.1" width="28.5" height="77.4" fill="#3f6fed"/><path d="M231.5 525.1 V519.6 Q231.5 517.6 233.5 517.6 H258.0 Q260.0 517.6 260.0 519.6 V525.1 Z" fill="#12a672"/><rect x="231.5" y="525.1" width="28.5" height="46.4" fill="#3f6fed"/><path d="M267.8 505.9 V473.2 Q267.8 471.2 269.8 471.2 H294.3 Q296.3 471.2 296.3 473.2 V505.9 Z" fill="#12a672"/><rect x="267.8" y="505.9" width="28.5" height="65.6" fill="#3f6fed"/><path d="M304.1 486.7 V465.2 Q304.1 463.2 306.1 463.2 H330.6 Q332.6 463.2 332.6 465.2 V486.7 Z" fill="#12a672"/><rect x="304.1" y="486.7" width="28.5" height="84.8" fill="#3f6fed"/><path d="M340.4 490.4 V488.7 Q340.4 486.7 342.4 486.7 H366.9 Q368.9 486.7 368.9 488.7 V490.4 Z" fill="#12a672"/><rect x="340.4" y="490.4" width="28.5" height="81.1" fill="#3f6fed"/><path d="M376.7 486.7 V485.0 Q376.7 483.0 378.7 483.0 H403.2 Q405.2 483.0 405.2 485.0 V486.7 Z" fill="#12a672"/><rect x="376.7" y="486.7" width="28.5" height="84.8" fill="#3f6fed"/><path d="M413.0 471.2 V461.5 Q413.0 459.5 415.0 459.5 H439.5 Q441.5 459.5 441.5 461.5 V471.2 Z" fill="#12a672"/><rect x="413.0" y="471.2" width="28.5" height="100.3" fill="#3f6fed"/><path d="M449.2 509.6 V507.9 Q449.2 505.9 451.2 505.9 H475.7 Q477.7 505.9 477.7 507.9 V509.6 Z" fill="#12a672"/><rect x="449.2" y="509.6" width="28.5" height="61.9" fill="#3f6fed"/><path d="M485.5 502.2 V496.1 Q485.5 494.1 487.5 494.1 H512.0 Q514.0 494.1 514.0 496.1 V502.2 Z" fill="#12a672"/><rect x="485.5" y="502.2" width="28.5" height="69.3" fill="#3f6fed"/><path d="M521.8 502.2 V492.4 Q521.8 490.4 523.8 490.4 H548.3 Q550.3 490.4 550.3 492.4 V502.2 Z" fill="#12a672"/><rect x="521.8" y="502.2" width="28.5" height="69.3" fill="#3f6fed"/><path d="M558.1 529.4 V527.1 Q558.1 525.1 560.1 525.1 H584.6 Q586.6 525.1 586.6 527.1 V529.4 Z" fill="#12a672"/><rect x="558.1" y="529.4" width="28.5" height="42.1" fill="#3f6fed"/><path d="M594.4 529.4 V515.9 Q594.4 513.9 596.4 513.9 H620.9 Q622.9 513.9 622.9 515.9 V529.4 Z" fill="#12a672"/><rect x="594.4" y="529.4" width="28.5" height="42.1" fill="#3f6fed"/><path d="M630.7 525.1 V504.2 Q630.7 502.2 632.7 502.2 H657.2 Q659.2 502.2 659.2 504.2 V525.1 Z" fill="#12a672"/><rect x="630.7" y="525.1" width="28.5" height="46.4" fill="#3f6fed"/><rect x="667.0" y="567.8" width="28.5" height="3.7" fill="#3f6fed"/><line x1="191.3" y1="447.7" x2="191.3" y2="571.5" stroke="#9c9c9c" stroke-width="1"/><line x1="191.3" y1="571.5" x2="699.4" y2="571.5" stroke="#9c9c9c" stroke-width="1"/><line x1="188.3" y1="571.5" x2="191.3" y2="571.5" stroke="#9c9c9c" stroke-width="1"/><line x1="188.3" y1="540.5" x2="191.3" y2="540.5" stroke="#9c9c9c" stroke-width="1"/><line x1="188.3" y1="509.6" x2="191.3" y2="509.6" stroke="#9c9c9c" stroke-width="1"/><line x1="188.3" y1="478.6" x2="191.3" y2="478.6" stroke="#9c9c9c" stroke-width="1"/><line x1="188.3" y1="447.7" x2="191.3" y2="447.7" stroke="#9c9c9c" stroke-width="1"/><line x1="209.4" y1="571.5" x2="209.4" y2="574.5" stroke="#9c9c9c" stroke-width="1"/><text x="212.0" y="579.1" font-family="Liberation Sans, sans-serif" font-size="6.3" fill="#666" text-anchor="end" transform="rotate(-45 212.0 579.1)">Jun 27</text><line x1="245.7" y1="571.5" x2="245.7" y2="574.5" stroke="#9c9c9c" stroke-width="1"/><text x="248.3" y="579.1" font-family="Liberation Sans, sans-serif" font-size="6.3" fill="#666" text-anchor="end" transform="rotate(-45 248.3 579.1)">Jul 04</text><line x1="282.0" y1="571.5" x2="282.0" y2="574.5" stroke="#9c9c9c" stroke-width="1"/><text x="284.6" y="579.1" font-family="Liberation Sans, sans-serif" font-size="6.3" fill="#666" text-anchor="end" transform="rotate(-45 284.6 579.1)">Jul 11</text><line x1="318.3" y1="571.5" x2="318.3" y2="574.5" stroke="#9c9c9c" stroke-width="1"/><text x="320.9" y="579.1" font-family="Liberation Sans, sans-serif" font-size="6.3" fill="#666" text-anchor="end" transform="rotate(-45 320.9 579.1)">Jul 18</text><line x1="354.6" y1="571.5" x2="354.6" y2="574.5" stroke="#9c9c9c" stroke-width="1"/><text x="357.2" y="579.1" font-family="Liberation Sans, sans-serif" font-size="6.3" fill="#666" text-anchor="end" transform="rotate(-45 357.2 579.1)">Jul 25</text><line x1="390.9" y1="571.5" x2="390.9" y2="574.5" stroke="#9c9c9c" stroke-width="1"/><text x="393.5" y="579.1" font-family="Liberation Sans, sans-serif" font-size="6.3" fill="#666" text-anchor="end" transform="rotate(-45 393.5 579.1)">Aug 01</text><line x1="427.2" y1="571.5" x2="427.2" y2="574.5" stroke="#9c9c9c" stroke-width="1"/><text x="429.8" y="579.1" font-family="Liberation Sans, sans-serif" font-size="6.3" fill="#666" text-anchor="end" transform="rotate(-45 429.8 579.1)">Aug 08</text><line x1="463.5" y1="571.5" x2="463.5" y2="574.5" stroke="#9c9c9c" stroke-width="1"/><text x="466.1" y="579.1" font-family="Liberation Sans, sans-serif" font-size="6.3" fill="#666" text-anchor="end" transform="rotate(-45 466.1 579.1)">Aug 15</text><line x1="499.8" y1="571.5" x2="499.8" y2="574.5" stroke="#9c9c9c" stroke-width="1"/><text x="502.4" y="579.1" font-family="Liberation Sans, sans-serif" font-size="6.3" fill="#666" text-anchor="end" transform="rotate(-45 502.4 579.1)">Aug 22</text><line x1="536.1" y1="571.5" x2="536.1" y2="574.5" stroke="#9c9c9c" stroke-width="1"/><text x="538.7" y="579.1" font-family="Liberation Sans, sans-serif" font-size="6.3" fill="#666" text-anchor="end" transform="rotate(-45 538.7 579.1)">Aug 29</text><line x1="572.4" y1="571.5" x2="572.4" y2="574.5" stroke="#9c9c9c" stroke-width="1"/><text x="575.0" y="579.1" font-family="Liberation Sans, sans-serif" font-size="6.3" fill="#666" text-anchor="end" transform="rotate(-45 575.0 579.1)">Sep 05</text><line x1="608.7" y1="571.5" x2="608.7" y2="574.5" stroke="#9c9c9c" stroke-width="1"/><text x="611.3" y="579.1" font-family="Liberation Sans, sans-serif" font-size="6.3" fill="#666" text-anchor="end" transform="rotate(-45 611.3 579.1)">Sep 12</text><line x1="645.0" y1="571.5" x2="645.0" y2="574.5" stroke="#9c9c9c" stroke-width="1"/><text x="647.6" y="579.1" font-family="Liberation Sans, sans-serif" font-size="6.3" fill="#666" text-anchor="end" transform="rotate(-45 647.6 579.1)">Sep 19</text><line x1="681.3" y1="571.5" x2="681.3" y2="574.5" stroke="#9c9c9c" stroke-width="1"/><text x="683.9" y="579.1" font-family="Liberation Sans, sans-serif" font-size="6.3" fill="#666" text-anchor="end" transform="rotate(-45 683.9 579.1)">Sep 21</text></svg>
<div class="t" style="top:571.5px;font-size:6.3px;color:#666;font-weight:400;right:837.2px;transform:translateY(-50%);">0</div>
<div class="t" style="top:540.55px;font-size:6.3px;color:#666;font-weight:400;right:837.2px;transform:translateY(-50%);">50</div>
<div class="t" style="top:509.6px;font-size:6.3px;color:#666;font-weight:400;right:837.2px;transform:translateY(-50%);">100</div>
<div class="t" style="top:478.65px;font-size:6.3px;color:#666;font-weight:400;right:837.2px;transform:translateY(-50%);">150</div>
<div class="t" style="top:447.7px;font-size:6.3px;color:#666;font-weight:400;right:837.2px;transform:translateY(-50%);">200</div>
<div class="card" style="left:732px;top:363px;width:286px;height:238px"></div>
<div class="t" style="top:382px;font-size:9.2px;color:#222;font-weight:400;left:746px;transform:translateY(-50%);-webkit-text-stroke:.25px #222;">AI Citations Report</div>
<div class="t" style="top:395.2px;font-size:8.15px;color:#6b7280;font-weight:400;left:746px;transform:translateY(-50%);">Traffic to your website from AI Sources</div>
<svg class="ic" style="left:733px;top:364px;width:285px;height:240px" viewBox="733 364 285 240"><defs><linearGradient id="g1" x1="0" y1="0" x2="0" y2="1"><stop offset="0" stop-color="#6e8ff0"/><stop offset="1" stop-color="#bcc9f8"/></linearGradient><linearGradient id="g2" x1="0" y1="0" x2="0" y2="1"><stop offset="0" stop-color="#3fb1f7"/><stop offset="1" stop-color="#aedcfc"/></linearGradient><linearGradient id="g3" x1="0" y1="0" x2="0" y2="1"><stop offset="0" stop-color="#1c9a72"/><stop offset="1" stop-color="#96d6b4"/></linearGradient><linearGradient id="g4" x1="0" y1="0" x2="0" y2="1"><stop offset="0" stop-color="#52a965"/><stop offset="1" stop-color="#b2dbbd"/></linearGradient></defs><path d="M874.50 438.30 A49.7 49.7 0 0 1 924.20 488.00 L904.10 488.00 A29.6 29.6 0 0 0 874.50 458.40 Z" fill="url(#g1)" stroke="#fff" stroke-width="2"/><path d="M924.20 488.00 A49.7 49.7 0 0 1 874.50 537.70 L874.50 517.60 A29.6 29.6 0 0 0 904.10 488.00 Z" fill="url(#g2)" stroke="#fff" stroke-width="2"/><path d="M874.50 537.70 A49.7 49.7 0 0 1 824.80 488.00 L844.90 488.00 A29.6 29.6 0 0 0 874.50 517.60 Z" fill="url(#g3)" stroke="#fff" stroke-width="2"/><path d="M824.80 488.00 A49.7 49.7 0 0 1 874.50 438.30 L874.50 458.40 A29.6 29.6 0 0 0 844.90 488.00 Z" fill="url(#g4)" stroke="#fff" stroke-width="2"/></svg>
<div class="t" style="top:460.4632161259534px;font-size:6.6px;color:#1a1a1a;font-weight:700;left:903.3367838740465px;transform:translate(-50%,-50%);">25%</div>
<div class="t" style="top:517.2367838740466px;font-size:6.6px;color:#1a1a1a;font-weight:700;left:902.5367838740466px;transform:translate(-50%,-50%);">25%</div>
<div class="t" style="top:516.3367838740465px;font-size:6.6px;color:#1a1a1a;font-weight:700;left:845.6632161259535px;transform:translate(-50%,-50%);">25%</div>
<div class="t" style="top:459.2632161259534px;font-size:6.6px;color:#1a1a1a;font-weight:700;left:846.9632161259534px;transform:translate(-50%,-50%);">25%</div>
<div class="t" style="top:488.9px;font-size:9.3px;color:#444;font-weight:400;left:874.5px;transform:translate(-50%,-50%);">4,000 Total</div>
<div class="abs" style="left:773px;top:555.3px;width:6.3px;height:6.3px;border-radius:2px;background:#4f77e3"></div>
<div class="t" style="top:558.5px;font-size:7.5px;color:#606060;font-weight:400;left:783.2px;transform:translateY(-50%);">Google AI Overviews</div>
<div class="abs" style="left:863px;top:555.3px;width:6.3px;height:6.3px;border-radius:2px;background:#2f9e55"></div>
<div class="t" style="top:558.5px;font-size:7.5px;color:#606060;font-weight:400;left:873.2px;transform:translateY(-50%);">Google AI Mode</div>
<div class="abs" style="left:936px;top:555.3px;width:6.3px;height:6.3px;border-radius:2px;background:#139a6d"></div>
<div class="t" style="top:558.5px;font-size:7.5px;color:#606060;font-weight:400;left:946.2px;transform:translateY(-50%);">ChatGPT</div>
<div class="abs" style="left:853px;top:574.3px;width:6.3px;height:6.3px;border-radius:2px;background:#3fa9f5"></div>
<div class="t" style="top:577.5px;font-size:7.5px;color:#606060;font-weight:400;left:863.2px;transform:translateY(-50%);">Perplexity</div>
</body></html>
